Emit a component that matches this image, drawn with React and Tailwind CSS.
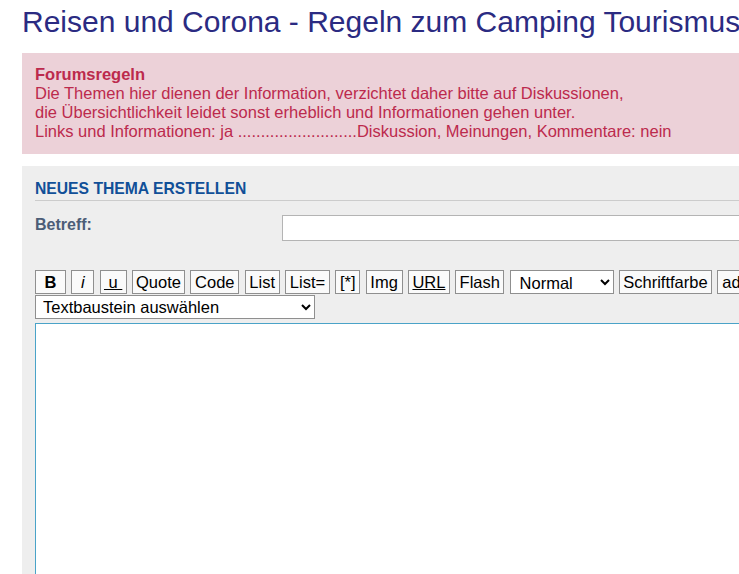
import React from 'react';

const ToolButton = ({ children, className = '' }) => (
  <button
    className={`h-[24px] px-0 text-center bg-[#fafafa] border border-[#8f8f8f] text-[16.5px] leading-none text-black ${className}`}
  >
    {children}
  </button>
);

const App = () => {
  return (
    <div className="w-[739px] h-[574px] overflow-hidden bg-white font-['Liberation_Sans',Arial,sans-serif]">
      <div className="w-[1100px] pl-[22px]">
        {/* Title */}
        <h2 className="text-[30px] leading-[34px] pt-[5px] text-[#2b2b82] whitespace-nowrap">
          Reisen und Corona - Regeln zum Camping Tourismus
        </h2>

        {/* Forum rules */}
        <div className="mt-[14px] bg-[#ecd1d8] text-[#bc2a4d] text-[16.5px] leading-[19px] pt-[12px] pb-[13px] px-[13px]">
          <div className="font-bold">Forumsregeln</div>
          <div>Die Themen hier dienen der Information, verzichtet daher bitte auf Diskussionen,</div>
          <div>die Übersichtlichkeit leidet sonst erheblich und Informationen gehen unter.</div>
          <div>Links und Informationen: ja ..........................Diskussion, Meinungen, Kommentare: nein</div>
        </div>

        {/* Posting form */}
        <div className="mt-[12px] bg-[#eeeeee] px-[13px] pt-[14px] pb-[20px]">
          <h3 className="text-[15.7px] leading-[18px] font-bold text-[#115098] uppercase border-b border-[#cccccc] pb-[2px]">
            Neues Thema erstellen
          </h3>

          <div className="flex mt-[12px]">
            <label className="w-[247px] text-[16px] font-bold text-[#4c5d77]">Betreff:</label>
            <input
              type="text"
              className="w-[600px] h-[26px] mt-[2px] bg-white border border-[#b4b4b4]"
            />
          </div>

          <div className="mt-[29px] flex items-center gap-[5.33px] whitespace-nowrap">
            <ToolButton className="w-[31px] font-bold">B</ToolButton>
            <ToolButton className="w-[23px] italic">i</ToolButton>
            <ToolButton className="w-[27px] underline">&nbsp;u&nbsp;</ToolButton>
            <ToolButton className="w-[53px]">Quote</ToolButton>
            <ToolButton className="w-[49px]">Code</ToolButton>
            <ToolButton className="w-[35px]">List</ToolButton>
            <ToolButton className="w-[45px]">List=</ToolButton>
            <ToolButton className="w-[25px]">[*]</ToolButton>
            <ToolButton className="w-[37px]">Img</ToolButton>
            <ToolButton className="w-[42px] underline">URL</ToolButton>
            <ToolButton className="w-[49px]">Flash</ToolButton>
            <select className="h-[24px] w-[104px] bg-white border border-[#8f8f8f] text-[16.5px] px-[5px] pt-[2px]" defaultValue="Normal">
              <option>Normal</option>
            </select>
            <ToolButton className="w-[93px]">Schriftfarbe</ToolButton>
            <ToolButton className="px-[4px]">addieren</ToolButton>
          </div>

          <div className="mt-[1px]">
            <select className="h-[24px] w-[280px] bg-white border border-[#8f8f8f] text-[16.5px] px-[3px]">
              <option>Textbaustein auswählen</option>
            </select>
          </div>

          <textarea className="mt-[3px] block w-[1000px] h-[300px] bg-white border border-[#4aa3c8] outline-none" />
        </div>
      </div>
    </div>
  );
};

export default App;
